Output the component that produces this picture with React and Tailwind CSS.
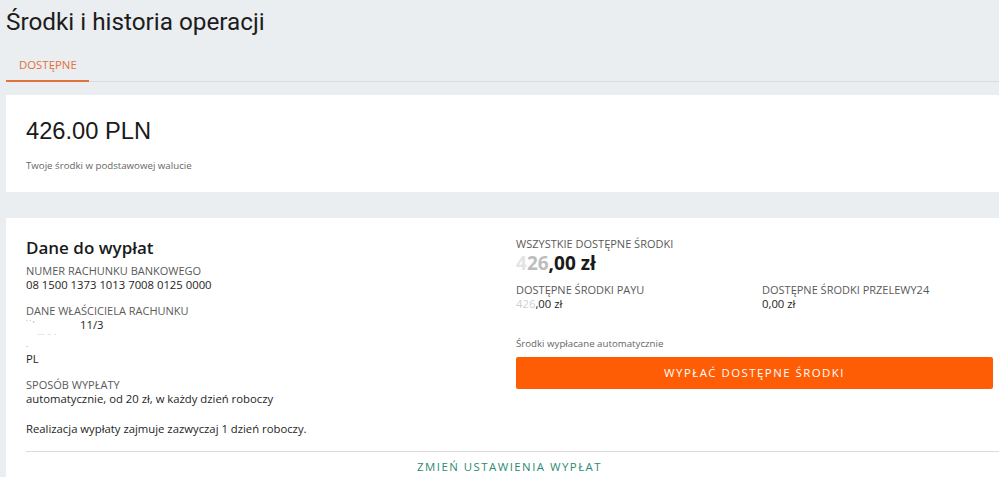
export default function App() {
  const os = { fontFamily: '"Open Sans", "Noto Sans", sans-serif' };
  const label = "text-[11px] leading-[14px] uppercase text-[#5a5a5a]";
  const value = "text-[11.3px] leading-[14px] text-[#1e1e1e]";
  return (
    <div className="min-h-[477px] w-[999px] overflow-hidden bg-[#ebeef1] pl-[6px]" style={os}>
      <h1
        className="pt-[6px] text-[24.3px] leading-[32px] text-[#1c1c1c]"
        style={{ fontFamily: 'Roboto, "Noto Sans", sans-serif' }}
      >
        Środki i historia operacji
      </h1>
      <div className="mt-[19px] flex border-b border-[#d9dcdf]">
        <div className="-mb-px w-[83px] border-b-[2px] border-[#e0723a] pb-[7px] pl-[13px] text-[11.4px] leading-[16px] text-[#e0723a]">
          DOSTĘPNE
        </div>
      </div>

      <div className="mt-[13px] h-[97px] bg-white pl-[20px] pt-[22px]">
        <div
          className="text-[23.7px] leading-[28px] text-[#1a1a1a]"
          style={{ fontFamily: '"Liberation Sans", Arial, sans-serif' }}
        >
          426.00 PLN
        </div>
        <div className="mt-[14px] text-[9.7px] leading-[14px] text-[#666]">
          Twoje środki w podstawowej walucie
        </div>
      </div>

      <div className="mt-[26px] bg-white pl-[20px] pt-[19px]">
        <div className="flex pr-[6px]">
          <div className="w-[490px]">
            <div className="text-[17px] leading-[22px] font-semibold text-[#1a1a1a]">Dane do wypłat</div>
            <div className={`${label} mt-[5px]`}>Numer rachunku bankowego</div>
            <div className={value}>08 1500 1373 1013 7008 0125 0000</div>
            <div className={`${label} mt-[12px]`}>Dane właściciela rachunku</div>
            <div className={`${value} flex h-[14px]`}>
              <span className="w-[54px] text-[8px] leading-[10px] text-[#888]">˙ ˙ ʼ</span>
              <span>11/3</span>
            </div>
            <div className="flex h-[20px] items-start">
              <span className="mt-[8px] w-[12px] text-[8px] leading-[8px] text-[#888]">.</span>
              <span className="mt-[1px] text-[8px] leading-[8px] tracking-[0.1em] text-[#999]">˙˙˙ ˙˙ ˙</span>
            </div>
            <div className={value}>PL</div>
            <div className={`${label} mt-[12px]`}>Sposób wypłaty</div>
            <div className={value}>automatycznie, od 20 zł, w każdy dzień roboczy</div>
            <div className={`${value} mt-[16px]`}>Realizacja wypłaty zajmuje zazwyczaj 1 dzień roboczy.</div>
          </div>
          <div className="flex-1">
            <div className={label}>Wszystkie dostępne środki</div>
            <div className="text-[19px] leading-[24px] font-bold text-[#1a1a1a]">
              <span className="text-[#e4e4e4]">4</span>
              <span className="text-[#bdbdbd]">26</span>,00 zł
            </div>
            <div className="mt-[8px] flex">
              <div className="w-[246px]">
                <div className={label}>Dostępne środki PayU</div>
                <div className={value}>
                  <span className="text-[#d0d0d0]">426</span>,00 zł
                </div>
              </div>
              <div>
                <div className={label}>Dostępne środki Przelewy24</div>
                <div className={value}>0,00 zł</div>
              </div>
            </div>
            <div className="mt-[26px] text-[9.7px] leading-[14px] text-[#666]">Środki wypłacane automatycznie</div>
            <button className="mt-[6px] flex h-[32px] w-full items-center justify-center rounded-[2px] bg-[#ff5d05] text-[11.4px] tracking-[0.13em] text-white">
              WYPŁAĆ DOSTĘPNE ŚRODKI
            </button>
          </div>
        </div>
        <div className="mt-[15px] border-t border-[#dcdcdc] pr-[6px] pt-[7px] pb-[6px] text-center text-[11.4px] leading-[16px] tracking-[0.13em] text-[#2b8a74]">
          ZMIEŃ USTAWIENIA WYPŁAT
        </div>
      </div>
    </div>
  );
}
